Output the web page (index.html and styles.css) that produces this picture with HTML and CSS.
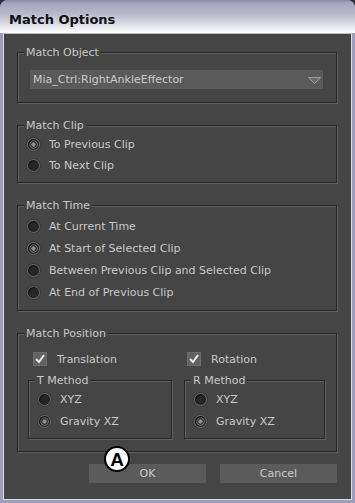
FILE: index.html
```html
<!DOCTYPE html>
<html>
<head>
<meta charset="utf-8">
<title>Match Options</title>
<link rel="stylesheet" href="styles.css">
</head>
<body>
<div class="window">
  <div class="titlebar">Match Options</div>
  <div class="frame">
    <div class="content">
      <fieldset class="group">
        <legend>Match Object</legend>
        <div class="dropdown">
          <span>Mia_Ctrl:RightAnkleEffector</span>
          <svg class="arrow" width="13" height="7" viewBox="0 0 13 7"><polygon points="0.5,0.5 12.5,0.5 6.5,6.5" fill="#6a6a6a" stroke="#9c9c9c" stroke-width="1"/></svg>
        </div>
      </fieldset>

      <fieldset class="group clip">
        <legend>Match Clip</legend>
        <div class="opt"><span class="radio on"></span>To Previous Clip</div>
        <div class="opt"><span class="radio"></span>To Next Clip</div>
      </fieldset>

      <fieldset class="group time">
        <legend>Match Time</legend>
        <div class="opt"><span class="radio"></span>At Current Time</div>
        <div class="opt"><span class="radio on"></span>At Start of Selected Clip</div>
        <div class="opt"><span class="radio"></span>Between Previous Clip and Selected Clip</div>
        <div class="opt"><span class="radio"></span>At End of Previous Clip</div>
      </fieldset>

      <fieldset class="group position">
        <legend>Match Position</legend>
        <div class="cols">
          <div class="col col-left">
            <div class="check-row"><span class="check"><svg width="12" height="12" viewBox="0 0 12 12"><polyline points="2,6 5,9 10,2" fill="none" stroke="#ececec" stroke-width="2"/></svg></span>Translation</div>
            <fieldset class="group sub">
              <legend>T Method</legend>
              <div class="opt"><span class="radio"></span>XYZ</div>
              <div class="opt"><span class="radio on"></span>Gravity XZ</div>
            </fieldset>
          </div>
          <div class="col col-right">
            <div class="check-row"><span class="check"><svg width="12" height="12" viewBox="0 0 12 12"><polyline points="2,6 5,9 10,2" fill="none" stroke="#ececec" stroke-width="2"/></svg></span>Rotation</div>
            <fieldset class="group sub">
              <legend>R Method</legend>
              <div class="opt"><span class="radio"></span>XYZ</div>
              <div class="opt"><span class="radio on"></span>Gravity XZ</div>
            </fieldset>
          </div>
        </div>
      </fieldset>

      <div class="buttons">
        <button class="btn">OK</button>
        <button class="btn">Cancel</button>
      </div>

      <div class="badge">A</div>
    </div>
  </div>
</div>
</body>
</html>
```

FILE: styles.css
```css
html, body {
  margin: 0;
  padding: 0;
}
body {
  width: 355px;
  height: 503px;
  overflow: hidden;
  background: #2e2e3a;
  font-family: "DejaVu Sans", sans-serif;
  font-size: 11px;
}
.window {
  width: 355px;
  height: 503px;
  display: flex;
  flex-direction: column;
  border-radius: 8px 8px 0 0;
  overflow: hidden;
  background: #9e9ebc;
}
.titlebar {
  height: 33px;
  box-sizing: border-box;
  padding: 8px 0 0 9px;
  line-height: 24px;
  font-size: 13px;
  font-weight: bold;
  color: #111;
  background: linear-gradient(to bottom, #8a8aaa 0px, #a4a4c0 3px, #b4b4ca 12px, #d0d0de 21px, #f0f0f5 29px, #ffffff 33px);
}
.frame {
  flex: 1;
  display: flex;
  padding: 0 3px 3px 3px;
}
.content {
  flex: 1;
  position: relative;
  display: flex;
  flex-direction: column;
  padding: 12px 14px 0 13px;
  background: #454545;
  border: 1px solid #dcdce6;
  border-top-color: #b8b8c8;
}
.group {
  margin: 0 0 16px 0;
  padding: 0;
  min-width: 0;
  border: 1px solid #282828;
  box-shadow: 1px 1px 0 #5e5e5e, inset 1px 1px 0 #5e5e5e;
}
.group legend {
  margin-left: 6px;
  padding: 0 2px;
  line-height: 13px;
  color: #c8c8c8;
  background: #454545;
}
.dropdown {
  height: 19px;
  margin: 11px 13px 13px 12px;
  padding: 0 2px 0 3px;
  display: flex;
  align-items: center;
  justify-content: space-between;
  background: #5a5a5a;
  color: #cacaca;
}
.arrow {
  display: block;
  margin-top: 1px;
}
.opt {
  display: flex;
  align-items: center;
  height: 22px;
  color: #c8c8c8;
  white-space: nowrap;
}
.clip {
  padding: 2px 0 6px 0;
}
.clip .opt {
  height: 21px;
}
.time {
  padding: 3px 0 7px 0;
}
.radio {
  box-sizing: border-box;
  flex: none;
  width: 13px;
  height: 13px;
  margin: 0 9px 0 9px;
  border-radius: 50%;
  background: #262626;
  border: 1px solid #686868;
  box-shadow: inset 1px 1px 1px #111, 0 0 0 1px #3c3c3c;
}
.radio.on {
  background: radial-gradient(circle, #8e8e8e 0 1.8px, #343434 2.4px 3px, #666 3.5px 4px, #262626 4.6px);
}
.position {
  margin-bottom: 12px;
}
.cols {
  display: grid;
  grid-template-columns: 144px 141px;
  column-gap: 12px;
  padding: 12px 11px 12px 10px;
}
.check-row {
  display: flex;
  align-items: center;
  height: 14px;
  color: #c8c8c8;
}
.col-left .check-row {
  padding-left: 5px;
}
.col-right .check-row {
  padding-left: 3px;
}
.check {
  box-sizing: border-box;
  width: 14px;
  height: 14px;
  margin-right: 10px;
  display: flex;
  align-items: center;
  justify-content: center;
  background: #626262;
  border: 1px solid #6e6e6e;
}
.check svg {
  display: block;
}
.sub {
  margin: 8px 0 0 0;
  padding: 1px 0 6px 0;
}
.buttons {
  display: flex;
  justify-content: flex-end;
  gap: 14px;
}
.btn {
  width: 117px;
  height: 19px;
  margin: 0;
  padding: 0;
  border: none;
  background: #5b5b5b;
  color: #cacaca;
  font-family: "DejaVu Sans", sans-serif;
  font-size: 11px;
}
.badge {
  position: absolute;
  left: 100px;
  top: 412px;
  width: 26px;
  height: 26px;
  box-sizing: border-box;
  border: 2px solid #000;
  border-radius: 50%;
  background: #fff;
  display: flex;
  align-items: center;
  justify-content: center;
  font-family: "Liberation Sans", sans-serif;
  font-weight: bold;
  font-size: 19px;
  line-height: 1;
  color: #000;
  padding-top: 1px;
}
```
